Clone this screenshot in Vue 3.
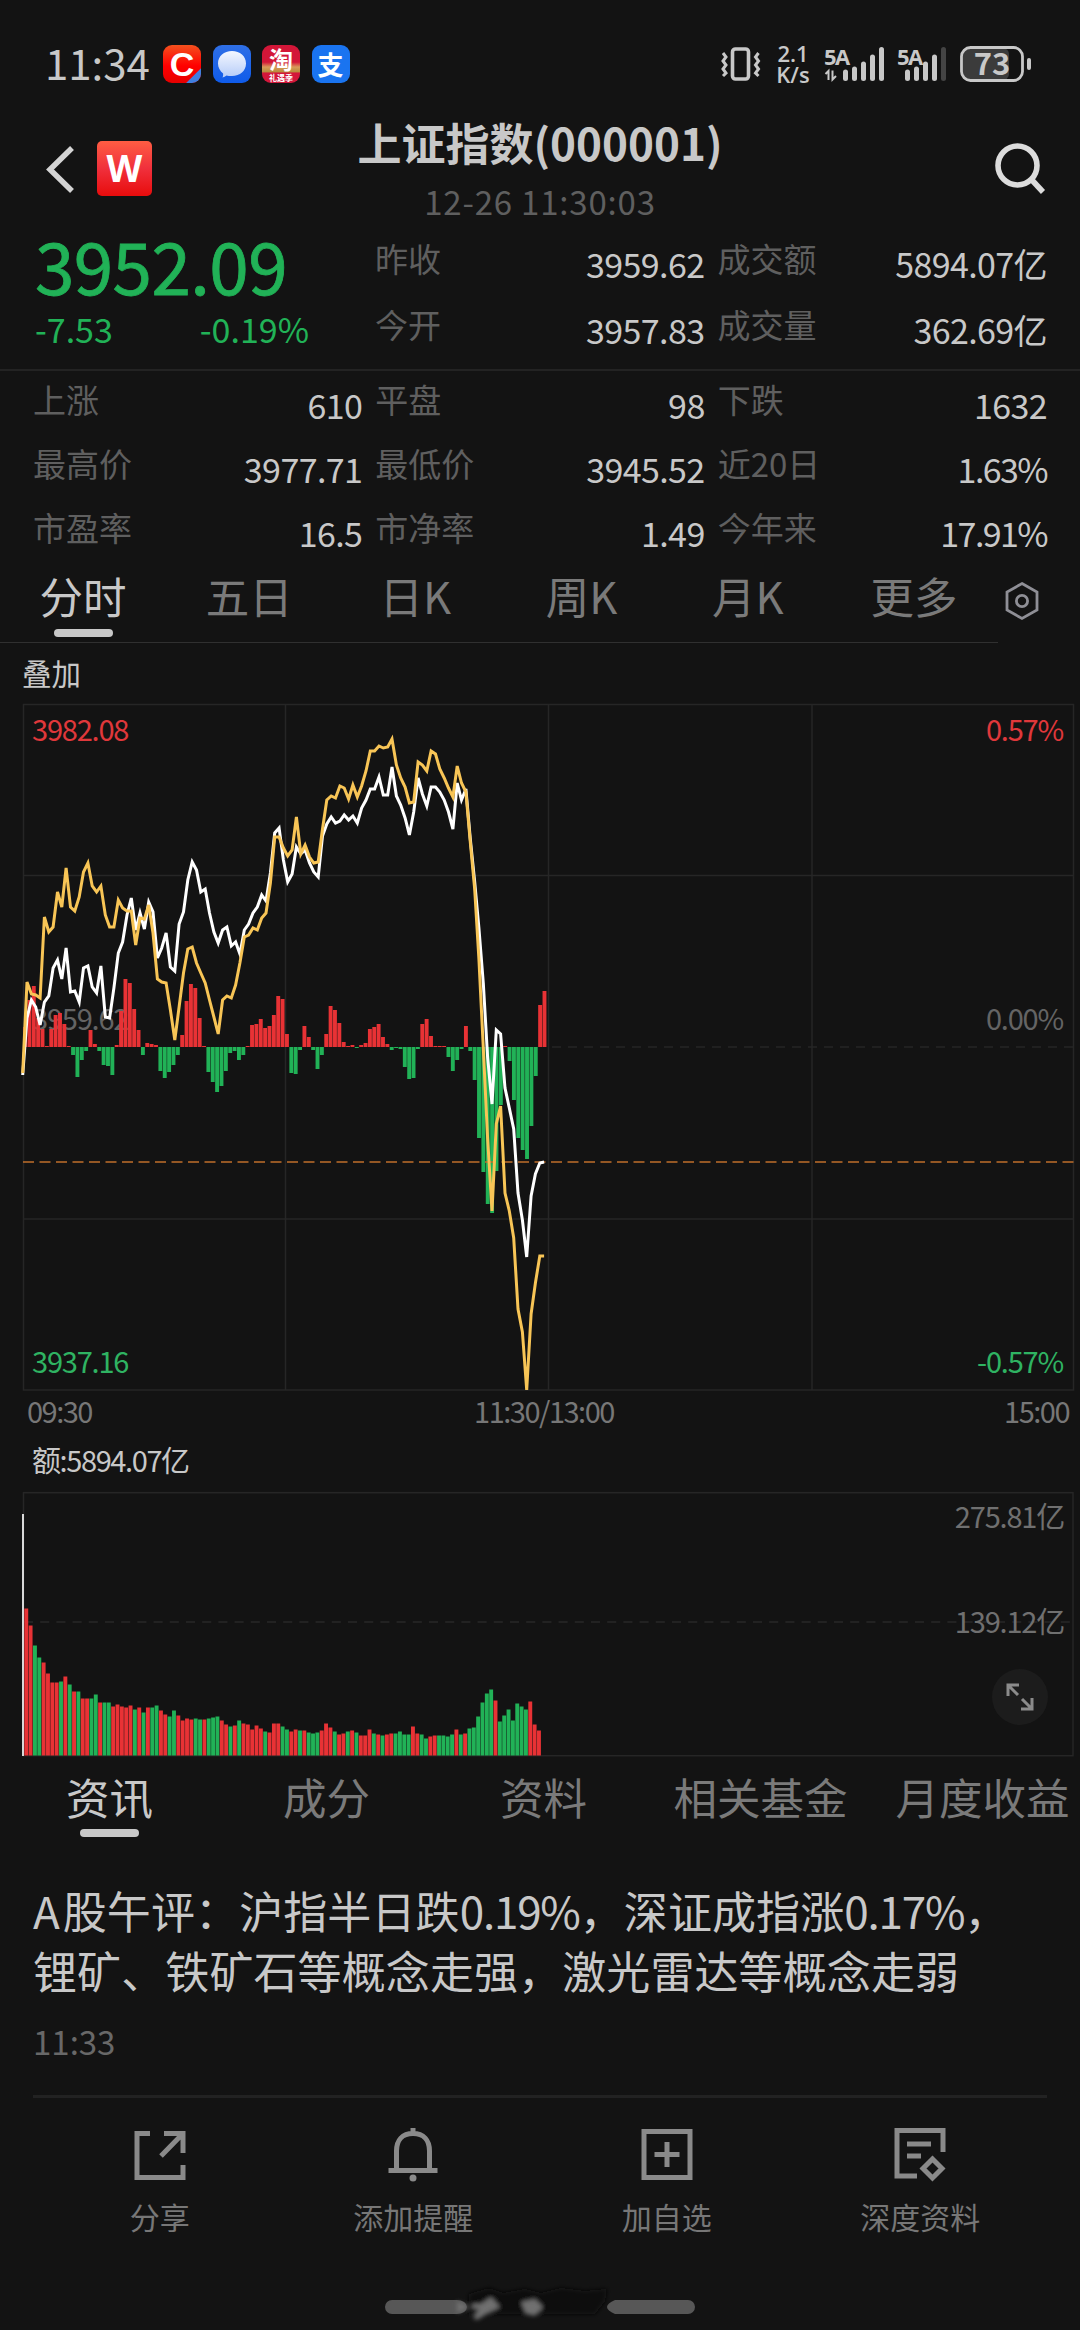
<script setup>
import { ref } from 'vue'

const quote = [
  [{ label: '昨收', value: '3959.62' }, { label: '成交额', value: '5894.07亿' }],
  [{ label: '今开', value: '3957.83' }, { label: '成交量', value: '362.69亿' }]
]

const stats = [
  { label: '上涨', value: '610' },
  { label: '平盘', value: '98' },
  { label: '下跌', value: '1632' },
  { label: '最高价', value: '3977.71' },
  { label: '最低价', value: '3945.52' },
  { label: '近20日', value: '1.63%' },
  { label: '市盈率', value: '16.5' },
  { label: '市净率', value: '1.49' },
  { label: '今年来', value: '17.91%' }
]

const periods = ['分时', '五日', '日K', '周K', '月K', '更多']
const period = ref('分时')

const sections = ['资讯', '成分', '资料', '相关基金', '月度收益']
const section = ref('资讯')

// One sample per minute, 09:30 - 11:30
const STEP = 4.345
const LEFT = 22.7
const ZERO = 347

const indexLine = [
  375, 318, 300, 307, 325, 302, 296, 268, 260, 279,
  248, 292, 291, 302, 268, 266, 287, 293, 266, 317,
  318, 288, 253, 242, 215, 198, 230, 213, 229, 202,
  212, 258, 248, 233, 267, 271, 224, 212, 180, 162,
  170, 192, 189, 213, 232, 243, 230, 227, 246, 242,
  254, 230, 224, 213, 207, 195, 201, 173, 133, 128,
  160, 182, 174, 147, 154, 150, 163, 172, 177, 136,
  124, 117, 123, 121, 115, 120, 116, 123, 108, 100,
  89, 89, 77, 95, 95, 67, 96, 105, 118, 135,
  112, 78, 94, 106, 87, 87, 92, 100, 112, 129,
  83, 100, 89, 138, 181, 228, 283, 357, 404, 330,
  334, 388, 408, 429, 493, 520, 557, 496, 474, 463, 462
]

const averageLine = [
  373, 282, 294, 295, 298, 217, 232, 227, 192, 207,
  168, 207, 211, 197, 172, 163, 186, 192, 186, 215,
  227, 227, 200, 208, 211, 211, 245, 218, 219, 205,
  233, 279, 282, 283, 310, 340, 307, 273, 249, 247,
  263, 273, 283, 300, 317, 334, 300, 296, 298, 285,
  263, 237, 235, 228, 230, 218, 213, 183, 137, 137,
  148, 156, 150, 117, 154, 145, 157, 163, 162, 129,
  100, 96, 98, 86, 88, 99, 85, 97, 86, 71,
  51, 51, 46, 48, 47, 39, 65, 78, 87, 103,
  102, 62, 65, 71, 51, 54, 69, 78, 88, 97,
  66, 83, 92, 141, 188, 259, 348, 438, 511, 424,
  406, 493, 511, 538, 609, 632, 690, 614, 583, 556, 556
]

const momentum = [
  20, 47, 61, 29, 18, 1, 18, 32, 34, 23,
  1, -8, -30, -13, -4, 17, 3, -4, -18, -19,
  -28, 2, 36, 68, 64, 38, 17, -8, 4, 3,
  2, -24, -31, -25, -18, -8, 12, 46, 63, 59,
  29, 1, -25, -35, -45, -39, -24, -6, -4, -13,
  -8, 1, 22, 23, 28, 19, 21, 32, 51, 48,
  13, -26, -27, -3, 21, 10, -3, -22, -8, 13,
  41, 37, 24, 5, 1, 2, -1, 2, 4, 18,
  20, 23, 10, 3, -3, -1, -2, -20, -32, -31,
  -2, 23, 28, 11, 1, 1, 1, -10, -24, -13,
  -2, 21, -4, -33, -91, -125, -157, -166, -124, -58,
  1, -14, -53, -91, -103, -112, -79, -29, 42, 56
]

const volumes = [
  147, 130, 110, 98, 93, 82, 73, 73, 74, 79,
  71, 64, 64, 57, 57, 57, 61, 53, 53, 53,
  49, 51, 49, 48, 50, 46, 48, 43, 48, 48,
  50, 45, 41, 39, 45, 40, 35, 37, 36, 37,
  36, 36, 37, 38, 39, 35, 31, 29, 30, 35,
  32, 31, 26, 30, 27, 24, 23, 32, 32, 29,
  26, 24, 26, 25, 25, 23, 22, 23, 25, 32,
  28, 24, 21, 22, 24, 25, 23, 20, 20, 26,
  22, 21, 20, 21, 22, 22, 24, 21, 21, 29,
  22, 21, 17, 19, 20, 20, 20, 19, 21, 26,
  21, 22, 27, 28, 39, 53, 62, 66, 55, 34,
  40, 46, 35, 52, 49, 46, 54, 31, 25
]
const volumeColors =
  'RRGGRRRRGR' + 'GRGRRGGRGG' + 'RRRRRGRGRG' + 'GRRGGRRRRG' +
  'GRGGGRRGRG' + 'RRRRRGRRRG' + 'GRRGRGGGRR' + 'RGRRGRGRRR' +
  'GRGRRGGGGR' + 'RGGRRGGGGR' + 'GRGGGGGGRG' + 'GGGGGGRRR'

function toPoints(values) {
  return values.map((y, i) => `${(LEFT + i * STEP).toFixed(1)},${y}`).join(' ')
}

const momentumBars = momentum.map((v, i) => ({
  x: LEFT + 0.4 + i * 4.365,
  y: v > 0 ? ZERO - v : ZERO,
  height: Math.abs(v),
  up: v > 0
}))

const volumeBars = volumes.map((v, i) => ({
  x: 24.3 + i * STEP,
  y: 263.5 - v,
  height: v,
  up: volumeColors[i] === 'R'
}))

// Signal bars: x offset and top of each step
const signal = [[0, 22.6], [9, 19.6], [18, 14.6], [27, 7.6], [36, 0]]
</script>

<template>
  <div class="screen">
    <div class="status">
      <span class="clock">11:34</span>
      <div class="apps">
        <span class="app app-c">C<i></i></span>
        <span class="app app-chat">
          <svg width="38" height="38" viewBox="0 0 38 38">
            <defs>
              <linearGradient id="bubble" x1="0" y1="0" x2="0" y2="1">
                <stop offset="0" stop-color="#f4f7ff" />
                <stop offset="1" stop-color="#b5ccf8" />
              </linearGradient>
            </defs>
            <path d="M19 6c8 0 14 5 14 12.500s-6 12.500-14 12.500c-2.500 0-4-.2-5.500-.6-1.200 1-2.500 1.800-4 2.200.5-1.200.8-2.700.6-4.200C7 26 5 22.500 5 18.500 5 11 11 6 19 6z" fill="url(#bubble)" />
          </svg>
        </span>
        <span class="app app-tao"><b>淘</b><em>礼遇季</em></span>
        <span class="app app-pay">支</span>
      </div>
      <div class="indicators">
        <svg class="vibrate" width="40" height="36" viewBox="0 0 40 36" fill="none" stroke="#c8c8c8">
          <rect x="11.500" y="3" width="16" height="30" rx="3" stroke-width="3.600" />
          <path d="M2 7l3 4-3 4 3 4-3 4 3 4-3 3M37.500 7l-3 4 3 4-3 4 3 4-3 4 3 3" stroke-width="3" />
        </svg>
        <div class="speed"><span>2.1</span><span>K/s</span></div>
        <svg class="signal" width="62" height="36" viewBox="0 0 62 36">
          <text x="0" y="18.500">5A</text>
          <path d="M4.500 34V25l-3 3M8.500 24.500v9l3.500-3.500" fill="none" stroke="#c8c8c8" stroke-width="2" />
          <rect v-for="[x, y] in signal" :key="x" :x="x + 19" :y="y + 1" width="5" :height="34 - y" rx="2.500" fill="#c8c8c8" />
        </svg>
        <svg class="signal second" width="52" height="36" viewBox="0 0 52 36">
          <text x="0" y="18.500">5A</text>
          <rect v-for="([x, y], i) in signal" :key="x" :x="x + 8" :y="y + 1" width="5" :height="34 - y" rx="2.500" :fill="i === 4 ? '#444' : '#c8c8c8'" />
        </svg>
        <svg class="battery" width="72" height="38" viewBox="0 0 72 38">
          <rect x="3" y="3" width="46" height="32" rx="6" fill="#3b3b3b" />
          <rect x="1.500" y="2.500" width="61" height="33" rx="9" fill="none" stroke="#c8c8c8" stroke-width="2.800" />
          <rect x="67" y="13" width="4" height="12" rx="2" fill="#c8c8c8" />
          <text x="32" y="30" text-anchor="middle">73</text>
        </svg>
      </div>
    </div>

    <header class="header">
      <div class="nav">
        <svg width="30" height="50" viewBox="0 0 30 50" fill="none" stroke="#d4d4d4" stroke-width="5.500">
          <path d="M27 4L5 25.500 27 47" />
        </svg>
        <span class="wind">W</span>
      </div>
      <div class="heading">
        <h1>上证指数(000001)</h1>
        <p>12-26 11:30:03</p>
      </div>
      <svg class="search" width="54" height="54" viewBox="0 0 54 54" fill="none" stroke="#dcdcdc">
        <circle cx="25.500" cy="23.500" r="19.500" stroke-width="5.600" />
        <path d="M39 37l12 13" stroke-width="5.600" />
      </svg>
    </header>

    <section class="quote">
      <div class="last">
        <div class="price">3952.09</div>
        <div class="change"><span>-7.53</span><span>-0.19%</span></div>
      </div>
      <div class="quote-cells">
        <template v-for="(row, i) in quote" :key="i">
          <div v-for="cell in row" :key="cell.label" class="cell">
            <span class="label">{{ cell.label }}</span>
            <span class="value">{{ cell.value }}</span>
          </div>
        </template>
      </div>
    </section>

    <section class="stats">
      <div v-for="cell in stats" :key="cell.label" class="cell">
        <span class="label">{{ cell.label }}</span>
        <span class="value" :class="{ percent: cell.value.endsWith('%') }">{{ cell.value }}</span>
      </div>
    </section>

    <nav class="periods">
      <div class="period-list">
        <div
          v-for="name in periods"
          :key="name"
          class="tab"
          :class="{ active: name === period }"
          @click="period = name"
        >
          {{ name }}
        </div>
      </div>
      <svg class="settings" width="36" height="40" viewBox="0 0 36 40" fill="none" stroke="#8f8f96" stroke-width="2.800">
        <path d="M18 2.500L33 11v18L18 37.500 3 29V11z" />
        <circle cx="18" cy="20" r="5.600" />
      </svg>
    </nav>

    <div class="overlay">叠加</div>

    <svg class="chart" width="1080" height="695" viewBox="0 0 1080 695">
      <g fill="none" stroke="#262626" stroke-width="1.500">
        <rect x="23.500" y="4.500" width="1050" height="685.500" />
        <path d="M285.500 4V690M548.500 4V690M812 4V690M23 175.500H1074M23 519H1074" />
        <path d="M552 347H1074" stroke-dasharray="9 7" />
      </g>
      <text class="axis up" x="32" y="41">3982.08</text>
      <text class="axis up end" x="1063" y="41">0.57%</text>
      <text class="axis" x="32" y="330">3959.62</text>
      <text class="axis end" x="1063" y="330">0.00%</text>
      <text class="axis down" x="32" y="673">3937.16</text>
      <text class="axis down end" x="1063" y="673">-0.57%</text>
      <rect
        v-for="(bar, i) in momentumBars"
        :key="i"
        :x="bar.x"
        :y="bar.y"
        width="3.900"
        :height="bar.height"
        :fill="bar.up ? '#e83235' : '#21b257'"
      />
      <path d="M23 462H1074" stroke="#c06f2b" stroke-width="1.500" stroke-dasharray="11 5.500" />
      <polyline :points="toPoints(indexLine)" fill="none" stroke="#fff" stroke-width="3" />
      <polyline :points="toPoints(averageLine)" fill="none" stroke="#f8c556" stroke-width="3" />
    </svg>

    <div class="times">
      <span>09:30</span>
      <span class="noon">11:30/13:00</span>
      <span>15:00</span>
    </div>

    <div class="turnover">额:5894.07亿</div>

    <div class="volume">
      <svg width="1080" height="265" viewBox="0 0 1080 265">
        <rect x="23.500" y=".7" width="1049.500" height="263" fill="none" stroke="#262626" stroke-width="1.500" />
        <path d="M24 130H1072" stroke="#292929" stroke-width="1.500" stroke-dasharray="9 7.200" />
        <rect
          v-for="(bar, i) in volumeBars"
          :key="i"
          :x="bar.x"
          :y="bar.y"
          width="3.900"
          :height="bar.height"
          :fill="bar.up ? '#e83235' : '#21b257'"
        />
        <path d="M23 22V264" stroke="#d8d8d8" stroke-width="2" />
        <text class="axis vol end" x="1064" y="36">275.81亿</text>
        <text class="axis vol end" x="1064" y="141">139.12亿</text>
      </svg>
      <button class="expand">
        <svg width="30" height="30" viewBox="0 0 30 30" fill="none" stroke="#8b8b8b" stroke-width="3">
          <path d="M3 14V3h11M3.500 3.500L13 13M27 16v11H16M26.500 26.500L17 17" />
        </svg>
      </button>
    </div>

    <nav class="sections">
      <div
        v-for="name in sections"
        :key="name"
        class="tab"
        :class="{ active: name === section }"
        @click="section = name"
      >
        {{ name }}
      </div>
    </nav>

    <article class="news">
      <p><span class="latin">A</span>股午评：沪指半日跌<span class="num">0.19%</span>，深证成指涨<span class="num">0.17%</span>，<br />锂矿、铁矿石等概念走强，激光雷达等概念走弱</p>
      <time>11:33</time>
    </article>

    <footer class="actions">
      <div class="action">
        <svg width="56" height="56" viewBox="0 0 56 56">
          <path d="M18 7.500H5v44h46V39M32 7.500h19V27M50 8.500L29 30" />
        </svg>
        <span>分享</span>
      </div>
      <div class="action">
        <svg width="56" height="56" viewBox="0 0 56 56">
          <path d="M28 2v6M11.500 44V25c0-11 6-17.500 16.500-17.500S44.500 14 44.500 25v19M3.500 44.500h49" />
          <circle cx="28" cy="52" r="3.500" class="solid" />
        </svg>
        <span>添加提醒</span>
      </div>
      <div class="action">
        <svg width="56" height="56" viewBox="0 0 56 56">
          <path d="M5 5.500h46v46H5zM28 16v25M15.500 28.500h25" />
        </svg>
        <span>加自选</span>
      </div>
      <div class="action">
        <svg width="56" height="56" viewBox="0 0 56 56">
          <path d="M25 50H5V4.500h46V26M15 18h24M15 30h14M40.500 33L50 42.500 40.500 52 31 42.500z" />
        </svg>
        <span>深度资料</span>
      </div>
    </footer>

    <div class="home">
      <svg width="310" height="36" viewBox="0 0 310 36">
        <defs>
          <filter id="smudge" x="-20%" y="-20%" width="140%" height="140%">
            <feGaussianBlur stdDeviation="2" />
          </filter>
        </defs>
        <path d="M7 18H72a10 7 0 0 1 0 14H7a7 7 0 0 1 0-14zM230 18h73a7 7 0 0 1 0 14h-73q-16-7 0-14z" fill="#575757" />
        <g filter="url(#smudge)">
          <path d="M84 12l20-6 14 5 22-4 16 4 20-5 24 3 22-2-2 12-10 13H84z" fill="#0e0e0e" />
          <path d="M72 19l12 6-12 6zM88 22l8 0 10-7 9 10-10 5-13 8-4-2 6-9-8-1zM136 20l14-3 8 8-8 9-9-2z" fill="#707070" />
        </g>
      </svg>
    </div>
  </div>
</template>

<style>
body {
  background: #131313;
}
</style>

<style scoped>
.screen {
  width: 1080px;
  height: 2330px;
  overflow: hidden;
  background: #131313;
  color: #c8c8c8;
  font-family: "Noto Sans CJK SC", sans-serif;
}

h1,
p {
  margin: 0;
}

svg {
  display: block;
  overflow: visible;
}

.status {
  display: flex;
  align-items: center;
  box-sizing: border-box;
  height: 116px;
  padding: 12px 48px 0 45px;
}

.clock {
  width: 118px;
  font-size: 42px;
  line-height: 52px;
  padding-bottom: 4px;
}

.apps {
  display: flex;
  gap: 11.5px;
}

.app {
  display: flex;
  align-items: center;
  justify-content: center;
  width: 38px;
  height: 38px;
  border-radius: 9px;
  overflow: hidden;
  color: #fff;
}

.app-c {
  position: relative;
  background: linear-gradient(#f4511e, #f00 55%, #e60000);
  font: 700 34px/38px "Liberation Sans", sans-serif;
}

.app-c i {
  position: absolute;
  right: -7px;
  bottom: -1px;
  width: 24px;
  height: 9px;
  background: #3f7fe0;
  transform: rotate(-45deg);
}

.app-chat {
  background: linear-gradient(#2f6fe6, #0f5bea);
}

.app-tao {
  flex-direction: column;
  background: linear-gradient(#d31638 45%, #d99a5a 58%, #b98d3d 70%, #d3173a 74%);
}

.app-tao b {
  font-size: 24px;
  line-height: 27px;
}

.app-tao em {
  font: 700 8px/11px "Noto Sans CJK SC", sans-serif;
}

.app-pay {
  background: #1a74f0;
  font-size: 26px;
  font-weight: 700;
  line-height: 38px;
}

.indicators {
  display: flex;
  align-items: center;
  margin-left: auto;
}

.speed {
  display: flex;
  flex-direction: column;
  width: 36px;
  margin: 0 13px 0 14px;
  font: 600 22px/21px "Open Sans", sans-serif;
  text-align: center;
  white-space: nowrap;
}

.signal text {
  font: 700 22px "Open Sans", sans-serif;
  fill: #c8c8c8;
  letter-spacing: -1.5px;
}

.second {
  margin: 0 11px;
}

.battery text {
  font-size: 31px;
  font-weight: 700;
  fill: #c8c8c8;
}

.header {
  display: grid;
  grid-template-columns: 1fr auto 1fr;
  align-items: center;
  height: 105px;
  padding: 0 34px;
}

.nav {
  display: flex;
  align-items: center;
  gap: 22px;
  padding-left: 11px;
}

.wind {
  width: 55px;
  height: 55px;
  border-radius: 5px;
  background: linear-gradient(#ff5d43, #f0303c 50%, #e80c0c);
  color: #fff;
  font: 700 37px/53px "Open Sans", sans-serif;
  text-align: center;
}

.heading {
  text-align: center;
}

h1 {
  font-size: 44px;
  font-weight: 700;
  line-height: 52px;
}

.heading p {
  margin-top: 13px;
  color: #5f5f5f;
  font-size: 33px;
  line-height: 40px;
  letter-spacing: 0.8px;
}

.search {
  justify-self: end;
}

.quote {
  display: grid;
  grid-template-columns: 329px 1fr;
  column-gap: 13px;
  box-sizing: border-box;
  height: 150px;
  padding: 0 33px;
  border-bottom: 2px solid #232323;
}

.last {
  padding: 5px 0 0 2px;
  color: #21b257;
}

.price {
  font-size: 71px;
  line-height: 76px;
  letter-spacing: -0.6px;
  -webkit-text-stroke: 0.8px #21b257;
}

.change {
  display: flex;
  width: 274px;
  margin-top: 5px;
  justify-content: space-between;
  font-size: 34px;
  line-height: 44px;
}

.quote-cells {
  display: grid;
  grid-template-columns: 1fr 1fr;
  grid-auto-rows: 66px;
  column-gap: 13px;
  padding-top: 15px;
}

.stats {
  display: grid;
  grid-template-columns: repeat(3, 1fr);
  grid-auto-rows: 64px;
  column-gap: 13px;
  box-sizing: border-box;
  height: 197px;
  padding: 6px 33px 0;
}

.cell {
  display: flex;
  justify-content: space-between;
  line-height: 44px;
}

.label {
  color: #5f5f5f;
  font-size: 33px;
}

.value {
  padding-top: 6px;
  font-size: 34px;
  letter-spacing: -0.6px;
}

.value.percent {
  letter-spacing: -1.6px;
}

.periods {
  display: flex;
  height: 75px;
}

.period-list {
  display: grid;
  grid-template-columns: repeat(6, 1fr);
  box-sizing: border-box;
  width: 998px;
  padding-right: 1px;
  border-bottom: 1px solid #303030;
}

.tab {
  color: #7a7a7a;
  font-size: 43.5px;
  line-height: 56px;
  text-align: center;
  white-space: nowrap;
}

.tab.active {
  color: #c8c8c8;
}

.tab.active::after {
  content: "";
  display: block;
  width: 59px;
  height: 8px;
  margin: 5px auto 0;
  border-radius: 4px;
  background: #c8c8c8;
}

.settings {
  margin: 13px 0 0 6px;
}

.overlay {
  height: 57px;
  padding-left: 22px;
  font-size: 29.5px;
  line-height: 59px;
}

.axis {
  fill: #646464;
  font-size: 29px;
  letter-spacing: -1.2px;
}

.axis.up {
  fill: #e0383b;
}

.axis.down {
  fill: #2fb362;
}

.axis.vol {
  fill: #707070;
}

.end {
  text-anchor: end;
}

.times {
  display: flex;
  justify-content: space-between;
  padding: 0 11px 0 27px;
  color: #777;
  font-size: 29px;
  line-height: 31px;
  letter-spacing: -1.5px;
}

.noon {
  margin-right: 8px;
}

.turnover {
  padding-left: 32px;
  font-size: 29px;
  line-height: 66px;
  letter-spacing: -1.4px;
}

.volume {
  position: relative;
}

.expand {
  position: absolute;
  top: 177px;
  right: 32px;
  display: flex;
  align-items: center;
  justify-content: center;
  width: 56px;
  height: 56px;
  padding: 0;
  border: none;
  border-radius: 50%;
  background: #1c1c1c;
}

.sections {
  display: grid;
  grid-template-columns: repeat(4, 217px) 1fr;
  height: 80px;
  padding: 12px 0 0 1px;
}

.sections .tab:last-child {
  padding-left: 16px;
}

.sections .tab.active::after {
  margin-top: 4px;
}

.news {
  padding: 31px 33px 0;
}

.news p {
  font-size: 44px;
  line-height: 60px;
  letter-spacing: 0.1px;
  white-space: nowrap;
}

.news .latin {
  letter-spacing: 3px;
}

.news .num {
  letter-spacing: -1.2px;
}

.news time {
  display: block;
  margin-top: 19px;
  padding-bottom: 32px;
  border-bottom: 3px solid #222;
  color: #686868;
  font-size: 33px;
  line-height: 44px;
}

.actions {
  display: grid;
  grid-template-columns: repeat(4, 1fr);
  padding: 28px 33px 0;
}

.action {
  display: flex;
  flex-direction: column;
  align-items: center;
  gap: 14px;
  color: #777;
  font-size: 30px;
  line-height: 40px;
}

.action svg {
  fill: none;
  stroke: #8a8a8a;
  stroke-width: 5;
}

.action .solid {
  fill: #8a8a8a;
  stroke: none;
}

.home {
  display: flex;
  justify-content: center;
  padding-top: 46px;
}
</style>
